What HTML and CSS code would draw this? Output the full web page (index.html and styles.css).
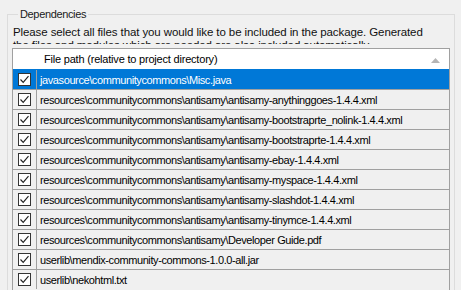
FILE: index.html
```html
<!DOCTYPE html>
<html>
<head>
<meta charset="utf-8">
<link rel="stylesheet" href="styles.css">
</head>
<body>
<fieldset class="group">
  <legend class="group-title">Dependencies</legend>
  <div class="desc">Please select all files that you would like to be included in the package. Generated<br>the files and modules which are needed are also included automatically.</div>
  <div class="list">
    <div class="head">
      <div class="cell-check"></div>
      <div class="cell-text">File path (relative to project directory)</div>
      <svg class="sort" width="9" height="5" viewBox="0 0 9 5"><polygon points="0,5 4.5,0 9,5" fill="#b5b5b5"/></svg>
    </div>
    <div class="row selected"><div class="cell-check"><span class="box"><svg width="11" height="11" viewBox="0 0 11 11"><polyline points="1.5,5.5 4.2,8.3 9.5,2.2" fill="none" stroke="#222" stroke-width="1.2"/></svg></span></div><div class="cell-text">javasource\communitycommons\Misc.java</div></div>
    <div class="row"><div class="cell-check"><span class="box"><svg width="11" height="11" viewBox="0 0 11 11"><polyline points="1.5,5.5 4.2,8.3 9.5,2.2" fill="none" stroke="#222" stroke-width="1.2"/></svg></span></div><div class="cell-text">resources\communitycommons\antisamy\antisamy-anythinggoes-1.4.4.xml</div></div>
    <div class="row"><div class="cell-check"><span class="box"><svg width="11" height="11" viewBox="0 0 11 11"><polyline points="1.5,5.5 4.2,8.3 9.5,2.2" fill="none" stroke="#222" stroke-width="1.2"/></svg></span></div><div class="cell-text">resources\communitycommons\antisamy\antisamy-bootstraprte_nolink-1.4.4.xml</div></div>
    <div class="row"><div class="cell-check"><span class="box"><svg width="11" height="11" viewBox="0 0 11 11"><polyline points="1.5,5.5 4.2,8.3 9.5,2.2" fill="none" stroke="#222" stroke-width="1.2"/></svg></span></div><div class="cell-text">resources\communitycommons\antisamy\antisamy-bootstraprte-1.4.4.xml</div></div>
    <div class="row"><div class="cell-check"><span class="box"><svg width="11" height="11" viewBox="0 0 11 11"><polyline points="1.5,5.5 4.2,8.3 9.5,2.2" fill="none" stroke="#222" stroke-width="1.2"/></svg></span></div><div class="cell-text">resources\communitycommons\antisamy\antisamy-ebay-1.4.4.xml</div></div>
    <div class="row"><div class="cell-check"><span class="box"><svg width="11" height="11" viewBox="0 0 11 11"><polyline points="1.5,5.5 4.2,8.3 9.5,2.2" fill="none" stroke="#222" stroke-width="1.2"/></svg></span></div><div class="cell-text">resources\communitycommons\antisamy\antisamy-myspace-1.4.4.xml</div></div>
    <div class="row"><div class="cell-check"><span class="box"><svg width="11" height="11" viewBox="0 0 11 11"><polyline points="1.5,5.5 4.2,8.3 9.5,2.2" fill="none" stroke="#222" stroke-width="1.2"/></svg></span></div><div class="cell-text">resources\communitycommons\antisamy\antisamy-slashdot-1.4.4.xml</div></div>
    <div class="row"><div class="cell-check"><span class="box"><svg width="11" height="11" viewBox="0 0 11 11"><polyline points="1.5,5.5 4.2,8.3 9.5,2.2" fill="none" stroke="#222" stroke-width="1.2"/></svg></span></div><div class="cell-text">resources\communitycommons\antisamy\antisamy-tinymce-1.4.4.xml</div></div>
    <div class="row"><div class="cell-check"><span class="box"><svg width="11" height="11" viewBox="0 0 11 11"><polyline points="1.5,5.5 4.2,8.3 9.5,2.2" fill="none" stroke="#222" stroke-width="1.2"/></svg></span></div><div class="cell-text">resources\communitycommons\antisamy\Developer Guide.pdf</div></div>
    <div class="row"><div class="cell-check"><span class="box"><svg width="11" height="11" viewBox="0 0 11 11"><polyline points="1.5,5.5 4.2,8.3 9.5,2.2" fill="none" stroke="#222" stroke-width="1.2"/></svg></span></div><div class="cell-text">userlib\mendix-community-commons-1.0.0-all.jar</div></div>
    <div class="row"><div class="cell-check"><span class="box"><svg width="11" height="11" viewBox="0 0 11 11"><polyline points="1.5,5.5 4.2,8.3 9.5,2.2" fill="none" stroke="#222" stroke-width="1.2"/></svg></span></div><div class="cell-text">userlib\nekohtml.txt</div></div>
  </div>
</fieldset>
</body>
</html>
```

FILE: styles.css
```css
html, body {
  margin: 0;
  padding: 0;
  background: #f0f0f0;
  height: 290px;
  overflow: hidden;
}
body {
  font-family: "Liberation Sans", Arial, sans-serif;
  font-size: 11px;
  color: #000;
}
.group {
  margin: 7px 6px 0 7px;
  padding: 0 4px 0 4px;
  border: 1px solid #dcdcdc;
  min-width: 0;
}
.group-title {
  padding: 0 2px;
  margin-left: 6px;
  line-height: 14px;
  font-size: 11px;
  letter-spacing: -0.35px;
  color: #1a1a1a;
}
.desc {
  font-size: 11.5px;
  letter-spacing: -0.1px;
  line-height: 13px;
  height: 18px;
  overflow: hidden;
  margin-top: 5px;
  padding-left: 1px;
  color: #111;
}
.list {
  margin-top: 4px;
  border: 1px solid #a0a0a0;
  border-bottom: none;
  background: #f0f0f0;
  height: 300px;
}
.head {
  display: flex;
  align-items: center;
  height: 20px;
  background: #fff;
  position: relative;
}
.head .cell-check {
  border-right: none;
}
.head .cell-text {
  padding-left: 8px;
  letter-spacing: -0.2px;
}
.sort {
  position: absolute;
  right: 9px;
  top: 9px;
}
.row {
  display: flex;
  height: 19px;
  border-top: 1px solid #a0a0a0;
}
.row.selected {
  background: #0078d7;
  color: #fff;
  border-top-color: #0078d7;
}
.cell-check {
  width: 23px;
  flex: none;
  border-right: 1px solid #a0a0a0;
  display: flex;
  align-items: center;
  justify-content: center;
}
.cell-text {
  padding-left: 3px;
  display: flex;
  align-items: center;
  white-space: nowrap;
  letter-spacing: -0.4px;
}
.box {
  width: 11px;
  height: 11px;
  border: 1px solid #333;
  background: #fff;
  display: block;
}
.box svg {
  display: block;
}
```
